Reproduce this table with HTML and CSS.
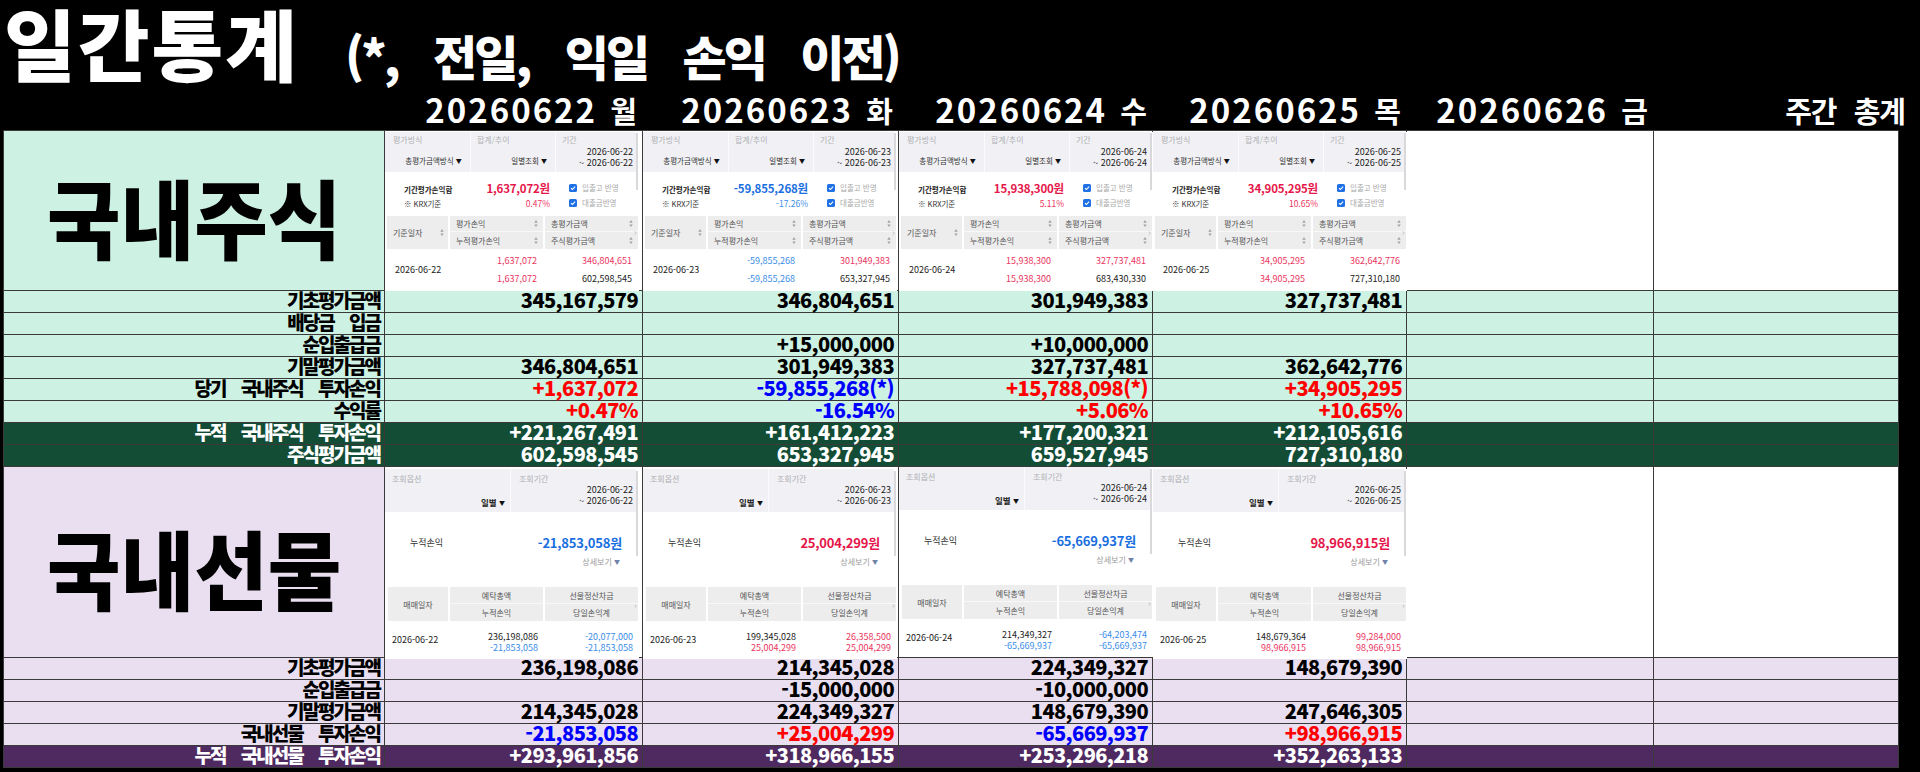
FILE: index.html
```html
<!DOCTYPE html>
<html lang="ko">
<head>
<meta charset="utf-8">
<title>일간통계</title>
<link rel="stylesheet" href="styles.css">
</head>
<body>
<div class="header">
  <div class="title">일간통계</div>
  <div class="sub">(*, 전일, 익일 손익 이전)</div>
</div>
<div class="dates">
  <span></span>
  <span>20260622 <em>월</em></span>
  <span>20260623 <em>화</em></span>
  <span>20260624 <em>수</em></span>
  <span>20260625 <em>목</em></span>
  <span>20260626 <em>금</em></span>
  <span class="last"><em>주간 총계</em></span>
</div>

<div class="tbl">
  <!-- 국내주식 이미지 행 -->
  <div class="m big"><span>국내주식</span></div>

  <div class="w">
    <div class="sv">
      <div class="band">
        <div class="bc"><div class="bl">평가방식</div><div class="bv c">총평가금액방식 <b class="tri">▼</b></div></div>
        <div class="bc sep"><div class="bl">합계/추이</div><div class="bv rt">일별조회 <b class="tri">▼</b></div></div>
        <div class="bc sep"><div class="bl">기간</div><div class="bd">2026-06-22</div><div class="bd">~ 2026-06-22</div></div>
      </div>
      <div class="ss">
        <div class="ssl"><span class="sk">기간평가손익합</span><span class="amt r">1,637,072원</span></div>
        <div class="ck"><svg class="box" viewBox="0 0 8 8"><rect width="8" height="8" rx="1.6" fill="#1f6fe5"/><path d="M2 4.1 3.4 5.5 6.1 2.6" stroke="#fff" stroke-width="1.1" fill="none"/></svg>입출고 반영</div>
        <div class="ssl"><span class="krx">※ KRX기준</span><span class="pct rl">0.47%</span></div>
        <div class="ck"><svg class="box" viewBox="0 0 8 8"><rect width="8" height="8" rx="1.6" fill="#1f6fe5"/><path d="M2 4.1 3.4 5.5 6.1 2.6" stroke="#fff" stroke-width="1.1" fill="none"/></svg>대출금반영</div>
      </div>
      <div class="th">
        <div class="h1">기준일자<svg class="so" viewBox="0 0 4 8"><path d="M2 0 4 3H0Z M0 5H4L2 8Z" fill="#a3a3a3"/></svg></div>
        <div class="hc top">평가손익<svg class="so" viewBox="0 0 4 8"><path d="M2 0 4 3H0Z M0 5H4L2 8Z" fill="#a3a3a3"/></svg></div>
        <div class="hc top">총평가금액<svg class="so" viewBox="0 0 4 8"><path d="M2 0 4 3H0Z M0 5H4L2 8Z" fill="#a3a3a3"/></svg></div>
        <div class="hc">누적평가손익<svg class="so" viewBox="0 0 4 8"><path d="M2 0 4 3H0Z M0 5H4L2 8Z" fill="#a3a3a3"/></svg></div>
        <div class="hc">주식평가금액<svg class="so" viewBox="0 0 4 8"><path d="M2 0 4 3H0Z M0 5H4L2 8Z" fill="#a3a3a3"/></svg></div>
      </div>
      <div class="td">
        <div class="dt">2026-06-22</div>
        <div class="tv"><div class="rl">1,637,072</div><div class="rl">1,637,072</div></div>
        <div class="tv"><div class="rl">346,804,651</div><div>602,598,545</div></div>
      </div>
      <i class="scr"></i><i class="chev">›</i>
    </div>
  </div>

  <div class="w">
    <div class="sv">
      <div class="band">
        <div class="bc"><div class="bl">평가방식</div><div class="bv c">총평가금액방식 <b class="tri">▼</b></div></div>
        <div class="bc sep"><div class="bl">합계/추이</div><div class="bv rt">일별조회 <b class="tri">▼</b></div></div>
        <div class="bc sep"><div class="bl">기간</div><div class="bd">2026-06-23</div><div class="bd">~ 2026-06-23</div></div>
      </div>
      <div class="ss">
        <div class="ssl"><span class="sk">기간평가손익합</span><span class="amt b">-59,855,268원</span></div>
        <div class="ck"><svg class="box" viewBox="0 0 8 8"><rect width="8" height="8" rx="1.6" fill="#1f6fe5"/><path d="M2 4.1 3.4 5.5 6.1 2.6" stroke="#fff" stroke-width="1.1" fill="none"/></svg>입출고 반영</div>
        <div class="ssl"><span class="krx">※ KRX기준</span><span class="pct bl2">-17.26%</span></div>
        <div class="ck"><svg class="box" viewBox="0 0 8 8"><rect width="8" height="8" rx="1.6" fill="#1f6fe5"/><path d="M2 4.1 3.4 5.5 6.1 2.6" stroke="#fff" stroke-width="1.1" fill="none"/></svg>대출금반영</div>
      </div>
      <div class="th">
        <div class="h1">기준일자<svg class="so" viewBox="0 0 4 8"><path d="M2 0 4 3H0Z M0 5H4L2 8Z" fill="#a3a3a3"/></svg></div>
        <div class="hc top">평가손익<svg class="so" viewBox="0 0 4 8"><path d="M2 0 4 3H0Z M0 5H4L2 8Z" fill="#a3a3a3"/></svg></div>
        <div class="hc top">총평가금액<svg class="so" viewBox="0 0 4 8"><path d="M2 0 4 3H0Z M0 5H4L2 8Z" fill="#a3a3a3"/></svg></div>
        <div class="hc">누적평가손익<svg class="so" viewBox="0 0 4 8"><path d="M2 0 4 3H0Z M0 5H4L2 8Z" fill="#a3a3a3"/></svg></div>
        <div class="hc">주식평가금액<svg class="so" viewBox="0 0 4 8"><path d="M2 0 4 3H0Z M0 5H4L2 8Z" fill="#a3a3a3"/></svg></div>
      </div>
      <div class="td">
        <div class="dt">2026-06-23</div>
        <div class="tv"><div class="bl2">-59,855,268</div><div class="bl2">-59,855,268</div></div>
        <div class="tv"><div class="rl">301,949,383</div><div>653,327,945</div></div>
      </div>
      <i class="scr"></i><i class="chev">›</i>
    </div>
  </div>

  <div class="w">
    <div class="sv">
      <div class="band">
        <div class="bc"><div class="bl">평가방식</div><div class="bv c">총평가금액방식 <b class="tri">▼</b></div></div>
        <div class="bc sep"><div class="bl">합계/추이</div><div class="bv rt">일별조회 <b class="tri">▼</b></div></div>
        <div class="bc sep"><div class="bl">기간</div><div class="bd">2026-06-24</div><div class="bd">~ 2026-06-24</div></div>
      </div>
      <div class="ss">
        <div class="ssl"><span class="sk">기간평가손익합</span><span class="amt r">15,938,300원</span></div>
        <div class="ck"><svg class="box" viewBox="0 0 8 8"><rect width="8" height="8" rx="1.6" fill="#1f6fe5"/><path d="M2 4.1 3.4 5.5 6.1 2.6" stroke="#fff" stroke-width="1.1" fill="none"/></svg>입출고 반영</div>
        <div class="ssl"><span class="krx">※ KRX기준</span><span class="pct rl">5.11%</span></div>
        <div class="ck"><svg class="box" viewBox="0 0 8 8"><rect width="8" height="8" rx="1.6" fill="#1f6fe5"/><path d="M2 4.1 3.4 5.5 6.1 2.6" stroke="#fff" stroke-width="1.1" fill="none"/></svg>대출금반영</div>
      </div>
      <div class="th">
        <div class="h1">기준일자<svg class="so" viewBox="0 0 4 8"><path d="M2 0 4 3H0Z M0 5H4L2 8Z" fill="#a3a3a3"/></svg></div>
        <div class="hc top">평가손익<svg class="so" viewBox="0 0 4 8"><path d="M2 0 4 3H0Z M0 5H4L2 8Z" fill="#a3a3a3"/></svg></div>
        <div class="hc top">총평가금액<svg class="so" viewBox="0 0 4 8"><path d="M2 0 4 3H0Z M0 5H4L2 8Z" fill="#a3a3a3"/></svg></div>
        <div class="hc">누적평가손익<svg class="so" viewBox="0 0 4 8"><path d="M2 0 4 3H0Z M0 5H4L2 8Z" fill="#a3a3a3"/></svg></div>
        <div class="hc">주식평가금액<svg class="so" viewBox="0 0 4 8"><path d="M2 0 4 3H0Z M0 5H4L2 8Z" fill="#a3a3a3"/></svg></div>
      </div>
      <div class="td">
        <div class="dt">2026-06-24</div>
        <div class="tv"><div class="rl">15,938,300</div><div class="rl">15,938,300</div></div>
        <div class="tv"><div class="rl">327,737,481</div><div>683,430,330</div></div>
      </div>
      <i class="scr"></i><i class="chev">›</i>
    </div>
  </div>

  <div class="w">
    <div class="sv">
      <div class="band">
        <div class="bc"><div class="bl">평가방식</div><div class="bv c">총평가금액방식 <b class="tri">▼</b></div></div>
        <div class="bc sep"><div class="bl">합계/추이</div><div class="bv rt">일별조회 <b class="tri">▼</b></div></div>
        <div class="bc sep"><div class="bl">기간</div><div class="bd">2026-06-25</div><div class="bd">~ 2026-06-25</div></div>
      </div>
      <div class="ss">
        <div class="ssl"><span class="sk">기간평가손익합</span><span class="amt r">34,905,295원</span></div>
        <div class="ck"><svg class="box" viewBox="0 0 8 8"><rect width="8" height="8" rx="1.6" fill="#1f6fe5"/><path d="M2 4.1 3.4 5.5 6.1 2.6" stroke="#fff" stroke-width="1.1" fill="none"/></svg>입출고 반영</div>
        <div class="ssl"><span class="krx">※ KRX기준</span><span class="pct rl">10.65%</span></div>
        <div class="ck"><svg class="box" viewBox="0 0 8 8"><rect width="8" height="8" rx="1.6" fill="#1f6fe5"/><path d="M2 4.1 3.4 5.5 6.1 2.6" stroke="#fff" stroke-width="1.1" fill="none"/></svg>대출금반영</div>
      </div>
      <div class="th">
        <div class="h1">기준일자<svg class="so" viewBox="0 0 4 8"><path d="M2 0 4 3H0Z M0 5H4L2 8Z" fill="#a3a3a3"/></svg></div>
        <div class="hc top">평가손익<svg class="so" viewBox="0 0 4 8"><path d="M2 0 4 3H0Z M0 5H4L2 8Z" fill="#a3a3a3"/></svg></div>
        <div class="hc top">총평가금액<svg class="so" viewBox="0 0 4 8"><path d="M2 0 4 3H0Z M0 5H4L2 8Z" fill="#a3a3a3"/></svg></div>
        <div class="hc">누적평가손익<svg class="so" viewBox="0 0 4 8"><path d="M2 0 4 3H0Z M0 5H4L2 8Z" fill="#a3a3a3"/></svg></div>
        <div class="hc">주식평가금액<svg class="so" viewBox="0 0 4 8"><path d="M2 0 4 3H0Z M0 5H4L2 8Z" fill="#a3a3a3"/></svg></div>
      </div>
      <div class="td">
        <div class="dt">2026-06-25</div>
        <div class="tv"><div class="rl">34,905,295</div><div class="rl">34,905,295</div></div>
        <div class="tv"><div class="rl">362,642,776</div><div>727,310,180</div></div>
      </div>
      <i class="scr"></i><i class="chev">›</i>
    </div>
  </div>

  <div class="w"></div>
  <div class="w"></div>

  <!-- 국내주식 데이터 -->
  <div class="m lbl">기초평가금액</div>
  <div class="m val">345,167,579</div>
  <div class="m val">346,804,651</div>
  <div class="m val">301,949,383</div>
  <div class="m val">327,737,481</div>
  <div class="m val"></div>
  <div class="m val"></div>

  <div class="m lbl">배당금 입금</div>
  <div class="m val"></div>
  <div class="m val"></div>
  <div class="m val"></div>
  <div class="m val"></div>
  <div class="m val"></div>
  <div class="m val"></div>

  <div class="m lbl">순입출급금</div>
  <div class="m val"></div>
  <div class="m val">+15,000,000</div>
  <div class="m val">+10,000,000</div>
  <div class="m val"></div>
  <div class="m val"></div>
  <div class="m val"></div>

  <div class="m lbl">기말평가금액</div>
  <div class="m val">346,804,651</div>
  <div class="m val">301,949,383</div>
  <div class="m val">327,737,481</div>
  <div class="m val">362,642,776</div>
  <div class="m val"></div>
  <div class="m val"></div>

  <div class="m lbl">당기 국내주식 투자손익</div>
  <div class="m val red">+1,637,072</div>
  <div class="m val blue">-59,855,268(*)</div>
  <div class="m val red">+15,788,098(*)</div>
  <div class="m val red">+34,905,295</div>
  <div class="m val"></div>
  <div class="m val"></div>

  <div class="m lbl">수익률</div>
  <div class="m val red">+0.47%</div>
  <div class="m val blue">-16.54%</div>
  <div class="m val red">+5.06%</div>
  <div class="m val red">+10.65%</div>
  <div class="m val"></div>
  <div class="m val"></div>

  <div class="dg lbl">누적 국내주식 투자손익</div>
  <div class="dg val">+221,267,491</div>
  <div class="dg val">+161,412,223</div>
  <div class="dg val">+177,200,321</div>
  <div class="dg val">+212,105,616</div>
  <div class="dg val"></div>
  <div class="dg val"></div>

  <div class="dg lbl">주식평가금액</div>
  <div class="dg val">602,598,545</div>
  <div class="dg val">653,327,945</div>
  <div class="dg val">659,527,945</div>
  <div class="dg val">727,310,180</div>
  <div class="dg val"></div>
  <div class="dg val"></div>

  <!-- 국내선물 이미지 행 -->
  <div class="lv big"><span>국내선물</span></div>

  <div class="w">
    <div class="fv">
      <div class="fband">
        <div class="bc"><div class="fbl">조회옵션</div><div class="fbv">일별 <b class="tri">▼</b></div></div>
        <div class="bc sep"><div class="fbl pl8">조회기간</div><div class="bd">2026-06-22</div><div class="bd">~ 2026-06-22</div></div>
      </div>
      <div class="fs">
        <div class="fs1"><span class="fk">누적손익</span><span class="famt b">-21,853,058원</span></div>
        <div class="more">상세보기 <b class="mtri">▼</b></div>
      </div>
      <div class="fth">
        <div class="fh1">매매일자</div>
        <div class="fhc top">예탁총액</div>
        <div class="fhc top">선물정산차금</div>
        <div class="fhc">누적손익</div>
        <div class="fhc">당일손익계</div>
      </div>
      <div class="ftd">
        <div class="fdt">2026-06-22</div>
        <div class="ftv"><div>236,198,086</div><div class="bl2">-21,853,058</div></div>
        <div class="ftv"><div class="bl2">-20,077,000</div><div class="bl2">-21,853,058</div></div>
      </div>
      <i class="fscr"></i><i class="fchev">›</i>
    </div>
  </div>

  <div class="w">
    <div class="fv">
      <div class="fband">
        <div class="bc"><div class="fbl">조회옵션</div><div class="fbv">일별 <b class="tri">▼</b></div></div>
        <div class="bc sep"><div class="fbl pl8">조회기간</div><div class="bd">2026-06-23</div><div class="bd">~ 2026-06-23</div></div>
      </div>
      <div class="fs">
        <div class="fs1"><span class="fk">누적손익</span><span class="famt r">25,004,299원</span></div>
        <div class="more">상세보기 <b class="mtri">▼</b></div>
      </div>
      <div class="fth">
        <div class="fh1">매매일자</div>
        <div class="fhc top">예탁총액</div>
        <div class="fhc top">선물정산차금</div>
        <div class="fhc">누적손익</div>
        <div class="fhc">당일손익계</div>
      </div>
      <div class="ftd">
        <div class="fdt">2026-06-23</div>
        <div class="ftv"><div>199,345,028</div><div class="rl">25,004,299</div></div>
        <div class="ftv"><div class="rl">26,358,500</div><div class="rl">25,004,299</div></div>
      </div>
      <i class="fscr"></i><i class="fchev">›</i>
    </div>
  </div>

  <div class="w">
    <div class="fv up">
      <div class="fband">
        <div class="bc"><div class="fbl">조회옵션</div><div class="fbv">일별 <b class="tri">▼</b></div></div>
        <div class="bc sep"><div class="fbl pl8">조회기간</div><div class="bd">2026-06-24</div><div class="bd">~ 2026-06-24</div></div>
      </div>
      <div class="fs">
        <div class="fs1"><span class="fk">누적손익</span><span class="famt b">-65,669,937원</span></div>
        <div class="more">상세보기 <b class="mtri">▼</b></div>
      </div>
      <div class="fth">
        <div class="fh1">매매일자</div>
        <div class="fhc top">예탁총액</div>
        <div class="fhc top">선물정산차금</div>
        <div class="fhc">누적손익</div>
        <div class="fhc">당일손익계</div>
      </div>
      <div class="ftd">
        <div class="fdt">2026-06-24</div>
        <div class="ftv"><div>214,349,327</div><div class="bl2">-65,669,937</div></div>
        <div class="ftv"><div class="bl2">-64,203,474</div><div class="bl2">-65,669,937</div></div>
      </div>
      <i class="fscr"></i><i class="fchev">›</i>
    </div>
  </div>

  <div class="w">
    <div class="fv">
      <div class="fband">
        <div class="bc"><div class="fbl">조회옵션</div><div class="fbv">일별 <b class="tri">▼</b></div></div>
        <div class="bc sep"><div class="fbl pl8">조회기간</div><div class="bd">2026-06-25</div><div class="bd">~ 2026-06-25</div></div>
      </div>
      <div class="fs">
        <div class="fs1"><span class="fk">누적손익</span><span class="famt r">98,966,915원</span></div>
        <div class="more">상세보기 <b class="mtri">▼</b></div>
      </div>
      <div class="fth">
        <div class="fh1">매매일자</div>
        <div class="fhc top">예탁총액</div>
        <div class="fhc top">선물정산차금</div>
        <div class="fhc">누적손익</div>
        <div class="fhc">당일손익계</div>
      </div>
      <div class="ftd">
        <div class="fdt">2026-06-25</div>
        <div class="ftv"><div>148,679,364</div><div class="rl">98,966,915</div></div>
        <div class="ftv"><div class="rl">99,284,000</div><div class="rl">98,966,915</div></div>
      </div>
      <i class="fscr"></i><i class="fchev">›</i>
    </div>
  </div>

  <div class="w"></div>
  <div class="w"></div>

  <!-- 국내선물 데이터 -->
  <div class="lv lbl">기초평가금액</div>
  <div class="lv val">236,198,086</div>
  <div class="lv val">214,345,028</div>
  <div class="lv val">224,349,327</div>
  <div class="lv val">148,679,390</div>
  <div class="lv val"></div>
  <div class="lv val"></div>

  <div class="lv lbl">순입출급금</div>
  <div class="lv val"></div>
  <div class="lv val">-15,000,000</div>
  <div class="lv val">-10,000,000</div>
  <div class="lv val"></div>
  <div class="lv val"></div>
  <div class="lv val"></div>

  <div class="lv lbl">기말평가금액</div>
  <div class="lv val">214,345,028</div>
  <div class="lv val">224,349,327</div>
  <div class="lv val">148,679,390</div>
  <div class="lv val">247,646,305</div>
  <div class="lv val"></div>
  <div class="lv val"></div>

  <div class="lv lbl">국내선물 투자손익</div>
  <div class="lv val blue">-21,853,058</div>
  <div class="lv val red">+25,004,299</div>
  <div class="lv val blue">-65,669,937</div>
  <div class="lv val red">+98,966,915</div>
  <div class="lv val"></div>
  <div class="lv val"></div>

  <div class="pp lbl">누적 국내선물 투자손익</div>
  <div class="pp val">+293,961,856</div>
  <div class="pp val">+318,966,155</div>
  <div class="pp val">+253,296,218</div>
  <div class="pp val">+352,263,133</div>
  <div class="pp val"></div>
  <div class="pp val"></div>
</div>
</body>
</html>
```

FILE: styles.css
```css
html, body {
  margin: 0;
  padding: 0;
}
body {
  width: 1920px;
  height: 772px;
  overflow: hidden;
  background: #000;
  font-family: "Noto Sans CJK KR", "Noto Sans", sans-serif;
  color: #000;
}

/* ---------- header ---------- */
.header {
  height: 93px;
  box-sizing: border-box;
  padding: 4px 0 0 4px;
  display: flex;
  align-items: baseline;
  gap: 46px;
  color: #fff;
  font-weight: 900;
  white-space: nowrap;
}
.title {
  font-size: 78px;
  line-height: 76px;
  letter-spacing: 2px;
}
.sub {
  font-size: 48px;
  line-height: 76px;
  letter-spacing: -3px;
  word-spacing: 25px;
}

.dates {
  height: 37px;
  margin-left: 4px;
  display: grid;
  grid-template-columns: 380px 257px 255px 253px 253px 246px 244px;
  column-gap: 1px;
  color: #fff;
}
.dates span {
  text-align: right;
  padding-right: 5px;
  font-size: 33px;
  line-height: 33px;
  font-weight: 700;
  letter-spacing: 2px;
  word-spacing: 2px;
  white-space: nowrap;
}
.dates em {
  font-style: normal;
  font-size: 29px;
  letter-spacing: 0;
}
.dates span.last {
  padding-right: 0;
  margin-right: -7px;
}
.dates span.last em {
  letter-spacing: -1px;
  word-spacing: 10px;
}

/* ---------- main table ---------- */
.tbl {
  margin-left: 3px;
  width: max-content;
  padding: 1px;
  display: grid;
  grid-template-columns: 380px 257px 255px 253px 253px 246px 244px;
  grid-template-rows: 159px repeat(8, 21px) 190px repeat(5, 21px);
  gap: 1px;
  background: #3a3a3a;
}
.m { background: #cdf1e3; }
.dg { background: #134d36; color: #fff; }
.lv { background: #e9dff0; }
.pp { background: #4f2a60; color: #fff; }
.w { background: #fff; }

.lbl {
  text-align: right;
  padding-right: 4px;
  font-size: 19px;
  line-height: 18px;
  font-weight: 900;
  letter-spacing: -2px;
  word-spacing: 12px;
  white-space: nowrap;
}
.val {
  text-align: right;
  padding-right: 4px;
  font-size: 20px;
  line-height: 18px;
  font-weight: 900;
  letter-spacing: -0.6px;
  white-space: nowrap;
}
.red { color: #ff0000; }
.blue { color: #0000ff; }

.big {
  display: flex;
  align-items: center;
  justify-content: center;
}
.big span {
  display: inline-block;
  font-size: 86px;
  line-height: 90px;
  font-weight: 900;
  transform: scaleX(0.93);
  margin-top: 10px;
}

/* ---------- shared embed bits ---------- */
.r { color: #e5174a; }
.rl { color: #ea3560; }
.b { color: #1a6fe0; }
.bl2 { color: #3a8de8; }

.bc { display: flex; flex-direction: column; }
.sep { border-left: 1px solid #fbfbfd; }
.tri { font-size: 6px; font-weight: 400; color: #111; vertical-align: 1px; }

/* ---------- stock embed ---------- */
.sv {
  position: relative;
  width: 254px;
  height: 159px;
  color: #222;
  background: #fff;
}
.band {
  margin-top: 1px;
  height: 40px;
  width: 251px;
  display: grid;
  grid-template-columns: 85px 85px 81px;
  background: #f1f1f5;
}
.bl {
  font-size: 8px;
  line-height: 10px;
  color: #b0b0b4;
  padding: 3px 0 0 8px;
}
.sep .bl { padding-left: 6px; }
.bv {
  font-size: 7.5px;
  line-height: 12px;
  margin-top: 10px;
  color: #333;
  white-space: nowrap;
}
.bv.c { text-align: center; padding-left: 12px; }
.bv.rt { text-align: right; padding-right: 8px; }
.bd {
  font-size: 9px;
  line-height: 11px;
  text-align: right;
  padding-right: 3px;
  color: #222;
  white-space: nowrap;
}
.bc .bl + .bd { margin-top: 1px; }

.ss {
  height: 44px;
  box-sizing: border-box;
  padding-top: 8px;
  display: grid;
  grid-template-columns: 165px 86px;
  grid-template-rows: 15px 15px;
  align-items: center;
}
.ssl {
  display: flex;
  justify-content: space-between;
  align-items: baseline;
  padding-left: 19px;
  white-space: nowrap;
}
.sk { font-size: 7.5px; font-weight: 700; color: #222; }
.amt { font-size: 11.5px; font-weight: 700; letter-spacing: -0.2px; }
.krx { font-size: 7.5px; color: #333; }
.pct { font-size: 8.5px; }
.ck {
  display: flex;
  align-items: center;
  gap: 5px;
  padding-left: 19px;
  font-size: 7.5px;
  color: #a8a8a8;
  white-space: nowrap;
}
.box { width: 8px; height: 8px; flex: none; }

.th {
  height: 33px;
  margin-left: 2px;
  display: grid;
  grid-template-columns: 61px 93px 93px;
  grid-template-rows: 16px 17px;
  column-gap: 2px;
}
.th > div {
  background: #ededee;
  display: flex;
  align-items: center;
  justify-content: space-between;
  font-size: 8px;
  color: #555;
  white-space: nowrap;
}
.h1 { grid-row: span 2; padding: 0 4px 0 6px; }
.hc { padding: 0 5px 0 6px; }
.hc.top { border-bottom: 1px solid #f8f8f8; }
.so { width: 4px; height: 7px; flex: none; }

.td {
  height: 41px;
  box-sizing: border-box;
  margin-left: 2px;
  padding-top: 3px;
  display: grid;
  grid-template-columns: 61px 93px 93px;
  column-gap: 2px;
  font-size: 9px;
  color: #222;
}
.dt { display: flex; align-items: center; padding-left: 8px; padding-bottom: 3px; }
.tv { text-align: right; padding-right: 6px; line-height: 18px; }

.scr {
  position: absolute;
  left: 251px;
  top: 1px;
  width: 2px;
  height: 57px;
  background: #d9d9dc;
}
.chev {
  position: absolute;
  left: 249px;
  top: 96px;
  font-style: normal;
  font-size: 9px;
  line-height: 10px;
  color: #bbb;
}

/* ---------- futures embed ---------- */
.fv {
  position: relative;
  width: 254px;
  height: 190px;
  color: #222;
  background: #fff;
}
.fv.up { margin-top: -2px; }
.fband {
  margin-top: 2px;
  height: 43px;
  width: 251px;
  display: grid;
  grid-template-columns: 125px 126px;
  background: #f1f1f5;
}
.fbl {
  font-size: 8px;
  line-height: 10px;
  color: #b0b0b4;
  padding: 5px 0 0 7px;
}
.fbl.pl8 { padding-left: 8px; }
.fbv {
  font-size: 8.5px;
  font-weight: 700;
  line-height: 12px;
  margin-top: 12px;
  text-align: right;
  padding-right: 5px;
  color: #222;
}
.fs {
  width: 251px;
  height: 75px;
  box-sizing: border-box;
  padding-top: 20px;
}
.fs1 {
  height: 20px;
  display: flex;
  justify-content: space-between;
  align-items: center;
  padding: 0 14px 0 25px;
  white-space: nowrap;
}
.fk { font-size: 9px; color: #333; }
.famt { font-size: 13px; font-weight: 700; letter-spacing: -0.2px; }
.more {
  margin-top: 4px;
  line-height: 12px;
  text-align: right;
  padding-right: 16px;
  font-size: 8px;
  color: #9a9a9a;
}
.mtri { font-size: 6px; color: #7083a8; font-weight: 400; vertical-align: 1px; }

.fth {
  height: 34px;
  margin-left: 3px;
  display: grid;
  grid-template-columns: 60px 93px 93px;
  grid-template-rows: 17px 17px;
  column-gap: 2px;
}
.fth > div {
  background: #ededee;
  display: flex;
  align-items: center;
  justify-content: center;
  font-size: 8px;
  color: #555;
  white-space: nowrap;
}
.fh1 { grid-row: span 2; }
.fhc.top { border-bottom: 1px solid #f8f8f8; }

.ftd {
  height: 36px;
  box-sizing: border-box;
  margin-left: 3px;
  padding-top: 10px;
  display: grid;
  grid-template-columns: 60px 93px 93px;
  column-gap: 2px;
  font-size: 9px;
  line-height: 11px;
  color: #222;
}
.fdt { display: flex; align-items: center; padding-left: 4px; padding-bottom: 10px; }
.ftv { text-align: right; padding-right: 5px; }

.fscr {
  position: absolute;
  left: 251px;
  top: 2px;
  width: 2px;
  height: 85px;
  background: #d9d9dc;
}
.fchev {
  position: absolute;
  left: 249px;
  top: 132px;
  font-style: normal;
  font-size: 9px;
  line-height: 10px;
  color: #bbb;
}
```
